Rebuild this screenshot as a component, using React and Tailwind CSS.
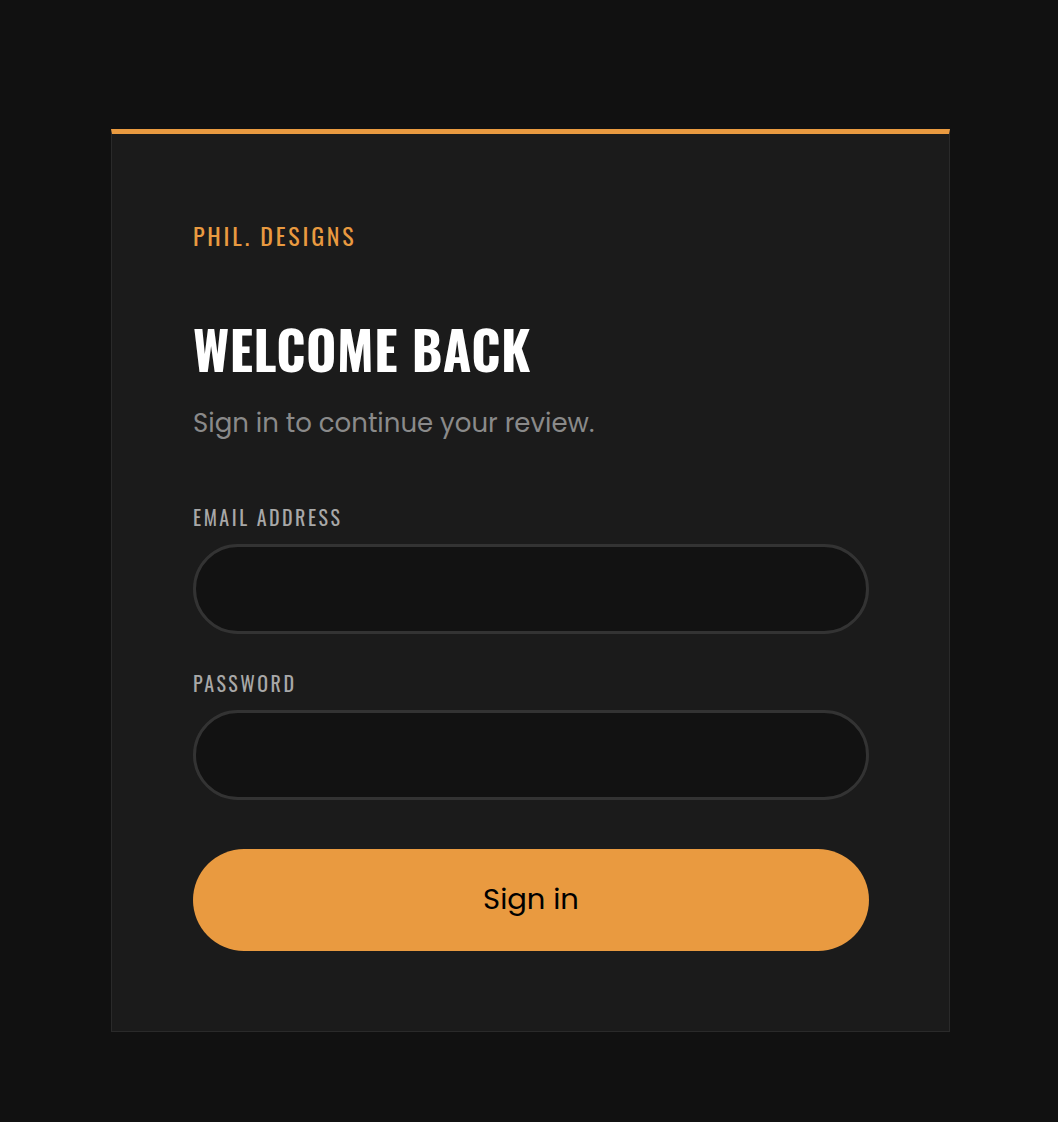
import { useState } from 'react';

function Field({ label, type, value, onChange, className }) {
  return (
    <div className={className}>
      <label className="block h-[24px] font-['Oswald',sans-serif] text-[20px] leading-[24px] tracking-[2.5px] text-[#a8a8a8] uppercase">
        {label}
      </label>
      <input
        type={type}
        value={value}
        onChange={e => onChange(e.target.value)}
        className="mt-[15px] block h-[90px] w-full rounded-full border-[3px] border-[#333333] bg-[#121212] px-8 font-['Poppins',sans-serif] text-[20px] text-white outline-none focus:border-[#e99a40]"
      />
    </div>
  );
}

export default function App() {
  const [email, setEmail] = useState('');
  const [password, setPassword] = useState('');

  const handleSubmit = e => {
    e.preventDefault();
  };

  return (
    <div className="flex min-h-screen bg-[#111111] pt-[129px] pb-[90px] pl-[111px]">
      <div className="h-fit w-[839px] border border-[#2a2a2a] border-t-[5px] border-t-[#e99a40] bg-[#1b1b1b] pt-[80px] pr-[80px] pb-[80px] pl-[81px]">
        <div className="h-[42px] font-['Oswald',sans-serif] text-[24px] leading-[42px] tracking-[2.8px] text-[#e99a40]">
          PHIL. DESIGNS
        </div>

        <h1 className="mt-[63px] h-[60px] font-['Oswald',sans-serif] text-[52px] font-bold leading-[60px] tracking-[0.5px] text-white">
          WELCOME BACK
        </h1>
        <p className="mt-[28px] h-[32px] font-['Poppins',sans-serif] text-[26px] leading-[32px] text-[#8a8a8a]">
          Sign in to continue your review.
        </p>

        <form onSubmit={handleSubmit}>
          <Field className="mt-[66px]" label="Email address" type="email" value={email} onChange={setEmail} />
          <Field className="mt-[37px]" label="Password" type="password" value={password} onChange={setPassword} />
          <button
            type="submit"
            className="mt-[49px] block h-[102px] w-full rounded-full bg-[#e99a40] font-['Poppins',sans-serif] text-[29px] text-black"
          >
            Sign in
          </button>
        </form>
      </div>
    </div>
  );
}
